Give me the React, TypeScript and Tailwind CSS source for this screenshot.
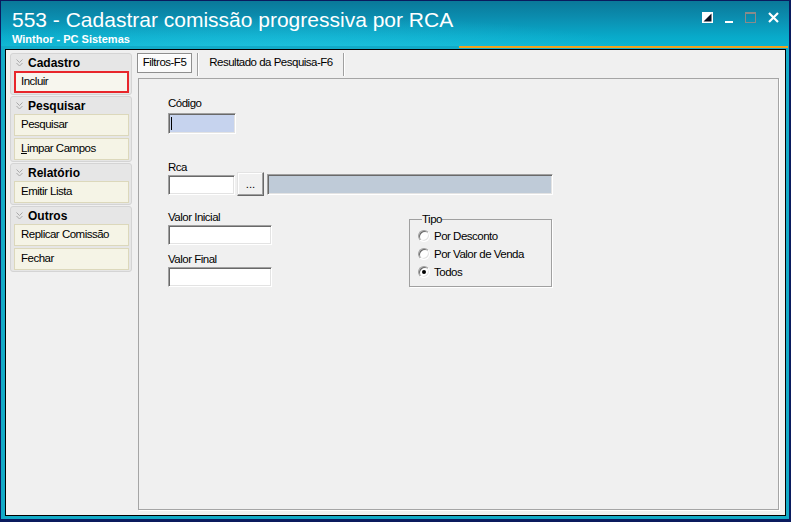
import React from "react";

const sunken =
  "border border-t-[#a0a0a0] border-l-[#a0a0a0] border-b-white border-r-white shadow-[inset_1px_1px_0_#696969,inset_-1px_-1px_0_#e3e3e3]";

function Chevron() {
  return (
    <svg width="7" height="8" viewBox="0 0 7 8" className="shrink-0">
      <polyline points="0.5,0.5 3.5,3.5 6.5,0.5" fill="none" stroke="#a8a8a8" strokeWidth="1" />
      <polyline points="0.5,4 3.5,7 6.5,4" fill="none" stroke="#a8a8a8" strokeWidth="1" />
    </svg>
  );
}

function Group({ title, children }: { title: string; children: React.ReactNode }) {
  return (
    <div className="rounded-[3px] border border-[#d4d4d4] bg-[#e6e6e6] pl-[3px] pr-[2px] pb-[1px]">
      <div className="h-[17px] flex items-center gap-[5px] pl-[2px]">
        <Chevron />
        <span className="text-[12px] font-bold text-black leading-none">{title}</span>
      </div>
      <div className="flex flex-col gap-[2px]">{children}</div>
    </div>
  );
}

function SideButton({ children, active }: { children: React.ReactNode; active?: boolean }) {
  return (
    <div
      className={
        active
          ? "h-[22px] flex items-center pl-[5px] border-2 border-[#e8262b] bg-[#f7f6ee] text-[11.5px] tracking-[-0.5px]"
          : "h-[22px] flex items-center pl-[6px] border border-[#dcd8bb] bg-[#f5f4e6] text-[11.5px] tracking-[-0.5px]"
      }
    >
      {children}
    </div>
  );
}

function Radio({ label, checked }: { label: string; checked?: boolean }) {
  return (
    <div className="h-[18px] flex items-center gap-[4px]">
      <div className="w-[12px] h-[12px] rounded-full border border-t-[#a0a0a0] border-l-[#a0a0a0] border-b-white border-r-white bg-white shadow-[inset_1px_1px_0_#696969,inset_-1px_-1px_0_#e3e3e3] flex items-center justify-center">
        {checked && <div className="w-[4px] h-[4px] rounded-full bg-black" />}
      </div>
      <span className="leading-[13px]">{label}</span>
    </div>
  );
}

export default function App() {
  return (
    <div className="w-[791px] h-[522px] bg-[#0a1b5e] pl-[1px] pt-[1px] pr-[2px] pb-[3px] font-['Liberation_Sans',Arial,sans-serif] text-black">
      <div className="h-full flex flex-col bg-[#12aac7] pb-[3px]">
        {/* barra de título */}
        <div className="h-[45px] flex justify-between bg-[radial-gradient(ellipse_at_35%_140%,rgba(60,215,240,0.55),transparent_55%),linear-gradient(180deg,#0a7899_0%,#0b8fb1_40%,#08aaca_80%,#0ab3d0_100%)]">
          <div className="pl-[11px] pt-[7px] text-white">
            <div className="text-[21px] leading-[24px]">553 - Cadastrar comissão progressiva por RCA</div>
            <div className="text-[11px] leading-[13px] font-bold mt-[1px]">Winthor - PC Sistemas</div>
          </div>
          <div className="flex items-start gap-[12px] pr-[10px] pt-[11px]">
            <svg width="11" height="11" viewBox="0 0 11 11">
              <rect x="0" y="0" width="11" height="11" fill="#fff" />
              <polygon points="9.5,1.5 9.5,9.5 1.5,9.5" fill="#0a1020" />
            </svg>
            <svg width="8" height="11" viewBox="0 0 8 11">
              <rect x="0" y="9" width="8" height="2" fill="#fff" />
            </svg>
            <svg width="11" height="11" viewBox="0 0 11 11">
              <rect x="0.5" y="0.5" width="10" height="10" fill="none" stroke="#8a8a8a" />
              <rect x="0" y="0" width="11" height="2" fill="#8a8a8a" />
            </svg>
            <svg width="11" height="11" viewBox="0 0 11 11">
              <path d="M1 1 L10 10 M10 1 L1 10" stroke="#fff" strokeWidth="2.2" />
            </svg>
          </div>
        </div>
        <div className="h-[2px] flex justify-end">
          <div className="w-[329px] h-[2px] bg-[#f0a21e] mr-[1px]" />
        </div>
        <div className="h-[1px]" />

        {/* conteúdo */}
        <div className="flex-1 ml-[4px] mr-[3px] border border-black bg-[#f0f0f0] flex pl-[4px] pr-[5px] pb-[5px]">
          <div className="w-[122px] pt-[3px] flex flex-col gap-[1px]">
            <Group title="Cadastro">
              <SideButton active>Incluir</SideButton>
            </Group>
            <Group title="Pesquisar">
              <SideButton>Pesquisar</SideButton>
              <SideButton>
                <span>
                  <span className="underline">L</span>impar Campos
                </span>
              </SideButton>
            </Group>
            <Group title="Relatório">
              <SideButton>Emitir Lista</SideButton>
            </Group>
            <Group title="Outros">
              <SideButton>Replicar Comissão</SideButton>
              <SideButton>Fechar</SideButton>
            </Group>
          </div>

          <div className="w-[642px] ml-[5px] flex flex-col">
            <div className="h-[28px] flex items-start pt-[3px] text-[11.5px] tracking-[-0.5px]">
              <div className="w-[55px] h-[20px] border border-[#8f8f8f] bg-[#fbfbfb] shadow-[inset_1px_1px_0_#fff] flex items-center justify-center">
                Filtros-F5
              </div>
              <div className="w-[2px] h-[23px] ml-[5px] border-l border-[#a0a0a0] border-r border-r-white" />
              <div className="w-[144px] h-[20px] flex items-center justify-center">Resultado da Pesquisa-F6</div>
              <div className="w-[2px] h-[23px] border-l border-[#a0a0a0] border-r border-r-white" />
            </div>

            <div className="flex-1 ml-[1px] border border-[#a5a5a5] shadow-[1px_1px_0_#fff] pl-[29px] pt-[18px] text-[11.5px] tracking-[-0.5px]">
              <div className="leading-[13px]">Código</div>
              <div className={`w-[68px] h-[21px] mt-[3px] bg-[#c6d3ee] flex items-center ${sunken}`}>
                <div className="w-[1px] h-[13px] bg-black ml-[2px]" />
              </div>

              <div className="leading-[13px] mt-[27px]">Rca</div>
              <div className="flex items-start mt-[-2px]">
                <div className={`w-[67px] h-[20px] mt-[3px] bg-white ${sunken}`} />
                <div className="w-[27px] h-[24px] ml-[2px] bg-[#f0f0f0] border border-t-[#e3e3e3] border-l-[#e3e3e3] border-b-[#696969] border-r-[#696969] shadow-[inset_-1px_-1px_0_#a0a0a0,inset_1px_1px_0_#fff] flex items-end justify-center pb-[5px] leading-none tracking-normal">
                  ...
                </div>
                <div className={`w-[286px] h-[21px] mt-[2px] ml-[3px] bg-[#bfcbd8] ${sunken}`} />
              </div>

              <div className="flex items-start mt-[15px]">
                <div className="w-[104px]">
                  <div className="leading-[13px]">Valor Inicial</div>
                  <div className={`w-[104px] h-[20px] mt-[1px] bg-white ${sunken}`} />
                  <div className="leading-[13px] mt-[8px]">Valor Final</div>
                  <div className={`w-[104px] h-[20px] mt-[1px] bg-white ${sunken}`} />
                </div>
                <fieldset className="w-[143px] h-[74px] ml-[137px] mt-[2px] border border-[#a0a0a0] shadow-[1px_1px_0_#fff] pl-[8px] pt-[1px]">
                  <legend className="ml-[4px] px-0 leading-[13px]">Tipo</legend>
                  <Radio label="Por Desconto" />
                  <Radio label="Por Valor de Venda" />
                  <Radio label="Todos" checked />
                </fieldset>
              </div>
            </div>
          </div>
        </div>
      </div>
    </div>
  );
}
